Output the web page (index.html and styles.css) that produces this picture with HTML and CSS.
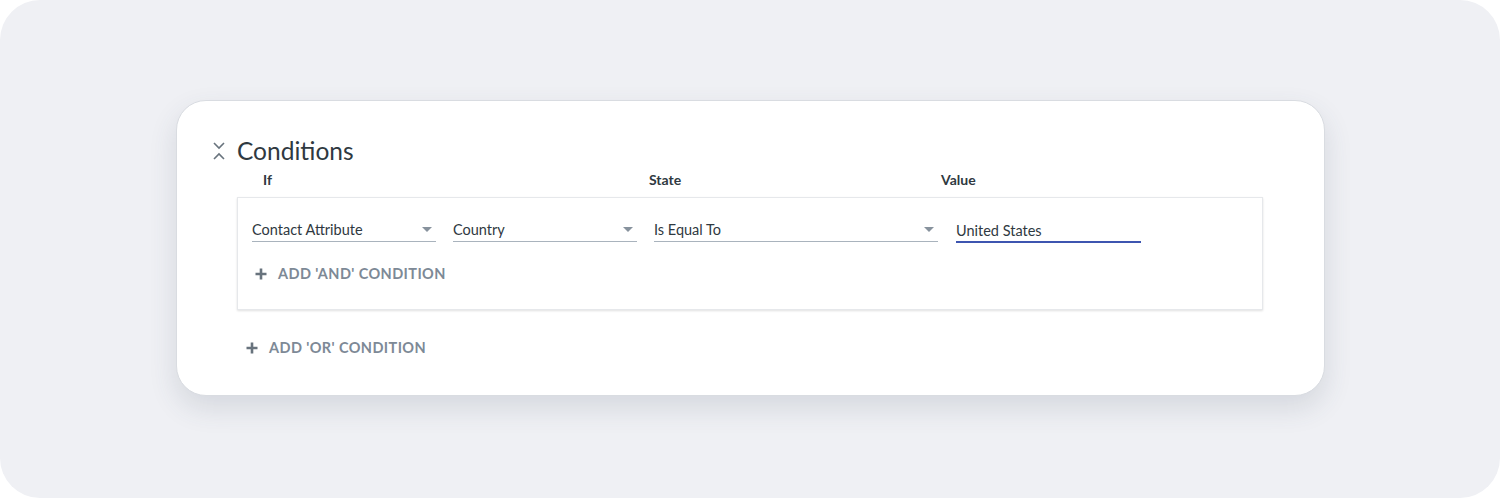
FILE: index.html
```html
<!DOCTYPE html>
<html lang="en">
<head>
    <meta charset="UTF-8">
    <meta name="viewport" content="width=device-width, initial-scale=1.0">
    <title>Conditions</title>
    <link rel="stylesheet" href="styles.css">
</head>
<body>
    <div class="canvas">
        <div class="card">
            <div class="card-header">
                <svg class="collapse-icon" width="14" height="22" viewBox="0 0 14 22">
                    <path d="M2 2 L7 7 L12 2" fill="none" stroke="#68737d" stroke-width="1.6"/>
                    <path d="M2 18 L7 13 L12 18" fill="none" stroke="#68737d" stroke-width="1.6"/>
                </svg>
                <h2 class="title">Conditions</h2>
            </div>

            <!-- Column labels -->
            <div class="labels">
                <span class="label label-if">If</span>
                <span class="label label-state">State</span>
                <span class="label">Value</span>
            </div>

            <div class="group">
                <div class="row">
                    <div class="select w-attr">
                        <span>Contact Attribute</span>
                        <span class="caret"></span>
                    </div>
                    <div class="select w-field">
                        <span>Country</span>
                        <span class="caret"></span>
                    </div>
                    <div class="select w-state">
                        <span>Is Equal To</span>
                        <span class="caret"></span>
                    </div>
                    <div class="input w-value">United States</div>
                </div>
                <button class="add-link">
                    <svg width="12" height="12" viewBox="0 0 12 12"><path d="M6 0.5 V11.5 M0.5 6 H11.5" stroke="#68737d" stroke-width="2.6"/></svg>
                    ADD 'AND' CONDITION
                </button>
            </div>

            <button class="add-link add-or">
                <svg width="12" height="12" viewBox="0 0 12 12"><path d="M6 0.5 V11.5 M0.5 6 H11.5" stroke="#68737d" stroke-width="2.6"/></svg>
                ADD 'OR' CONDITION
            </button>
        </div>
    </div>
</body>
</html>
```

FILE: styles.css
```css
body {
    margin: 0;
    padding: 0;
    background: #ffffff;
    font-family: Lato, "Open Sans", Arial, sans-serif;
    color: #2f3941;
}

.canvas {
    width: 1500px;
    height: 498px;
    box-sizing: border-box;
    background: #eff0f4;
    border-radius: 40px;
    padding: 100px 0 0 176px;
}

.card {
    width: 1149px;
    height: 296px;
    box-sizing: border-box;
    background: #ffffff;
    border: 1px solid #d9dce1;
    border-radius: 30px;
    box-shadow: 0 12px 28px rgba(60, 70, 90, 0.14);
    padding: 34px 0 0 35px;
}

.card-header {
    display: flex;
    align-items: center;
    height: 32px;
}

.collapse-icon {
    margin-right: 11px;
    margin-top: 1px;
}

.title {
    margin: 0;
    font-size: 24.5px;
    font-weight: 400;
    line-height: 32px;
    color: #2f3941;
}

.labels {
    display: flex;
    padding-left: 51px;
    height: 24px;
    align-items: center;
}

.label {
    font-size: 14px;
    font-weight: 700;
    color: #2f3941;
}

.label-if { width: 386px; }
.label-state { width: 292px; }

.group {
    margin: 6px 0 0 25px;
    width: 1026px;
    height: 113px;
    box-sizing: border-box;
    border: 1px solid #e6e8eb;
    box-shadow: 0 1px 2px rgba(0, 0, 0, 0.12);
    padding: 18px 0 0 14px;
}

.row {
    display: flex;
    gap: 17px;
}

.select,
.input {
    display: flex;
    align-items: center;
    justify-content: space-between;
    height: 26px;
    box-sizing: border-box;
    font-size: 14.5px;
    color: #2f3941;
    border-bottom: 1px solid #a9b3bd;
    padding-top: 2px;
}

.input {
    border-bottom: 2px solid #3d55b0;
    height: 27px;
    padding-top: 3px;
    margin-left: 1px;
}

.w-attr { width: 184px; }
.w-field { width: 184px; }
.w-state { width: 284px; }
.w-value { width: 185px; }

.caret {
    width: 0;
    height: 0;
    border-left: 5px solid transparent;
    border-right: 5px solid transparent;
    border-top: 5px solid #87929d;
    margin-right: 4px;
}

.add-link {
    display: flex;
    align-items: center;
    gap: 11px;
    background: none;
    border: 0;
    padding: 0;
    font-family: inherit;
    font-size: 14.5px;
    font-weight: 700;
    letter-spacing: 0.4px;
    color: #7d8996;
    cursor: pointer;
    margin: 22px 0 0 3px;
}

.add-or {
    margin: 29px 0 0 34px;
}
```
